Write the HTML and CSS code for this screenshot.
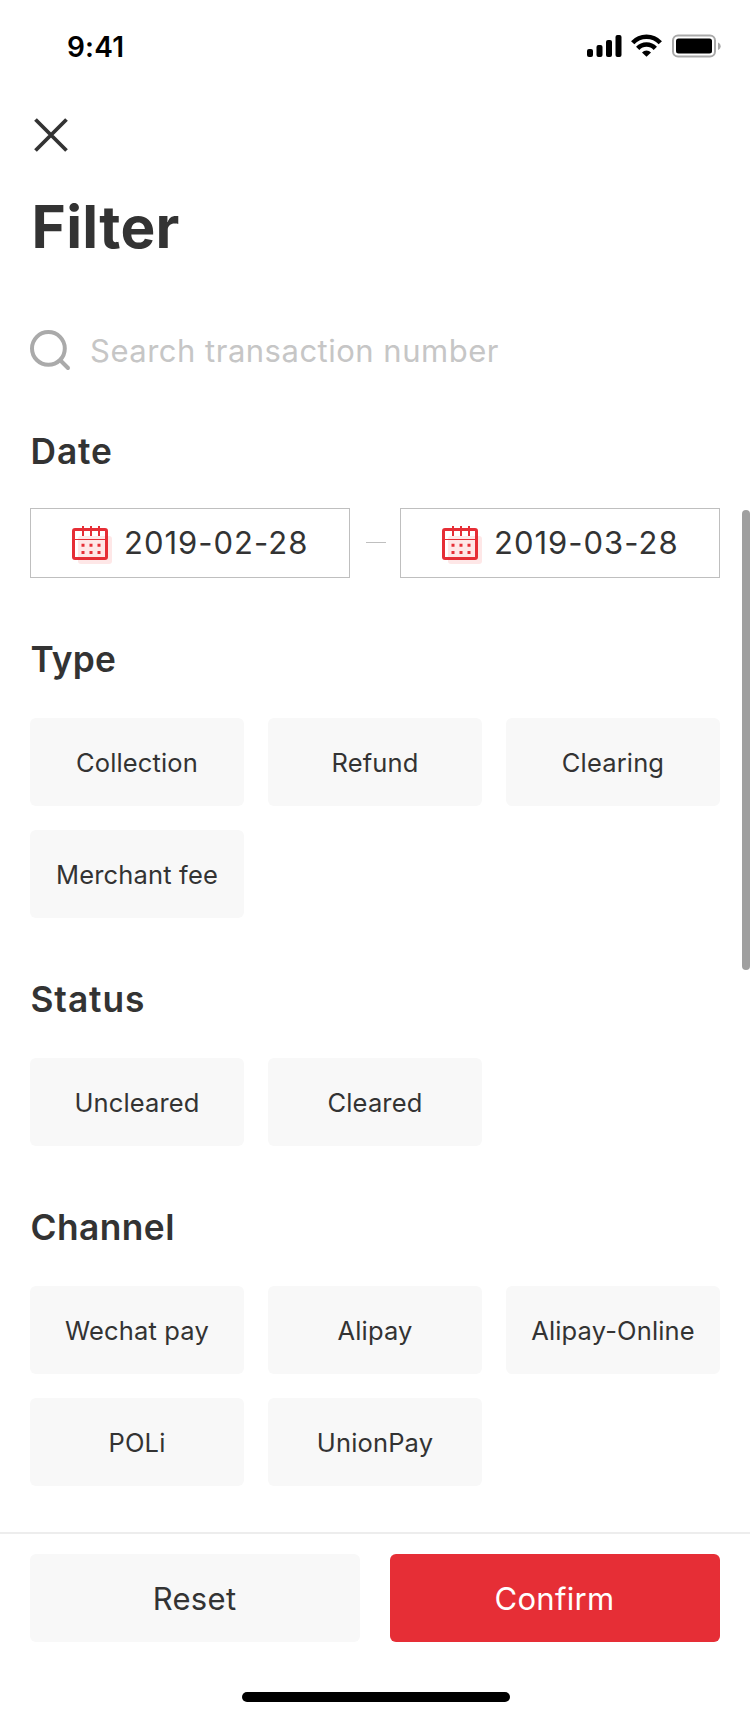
FILE: index.html
```html
<!DOCTYPE html>
<html lang="en">
<head>
<meta charset="utf-8">
<title>Filter</title>
<link rel="stylesheet" href="styles.css">
</head>
<body>
<svg class="defs" width="0" height="0" aria-hidden="true">
  <symbol id="calendar" viewBox="0 0 40 38">
    <rect x="6" y="10" width="34" height="28" rx="3" fill="#fee7e7"/>
    <rect x="1.5" y="3.5" width="33" height="29" rx="1.5" fill="none" stroke="#e62e36" stroke-width="3"/>
    <path d="M3 13.5h30" stroke="#e62e36" stroke-width="1"/>
    <path d="M11 0v10M19 0v10M27 0v10" stroke="#e62e36" stroke-width="2"/>
    <path d="M9.5 19.2h3M17.500 19.200h3M25.500 19.200h3M9.500 26.500h3M17.500 26.500h3M25.500 26.500h3" stroke="#e62e36" stroke-width="3"/>
  </symbol>
</svg>
<div class="screen">
  <header class="status-bar">
    <span class="time">9:41</span>
    <svg class="indicators" width="135" height="24" viewBox="0 0 135 24">
      <rect x="1" y="15" width="6" height="8" rx="2"/>
      <rect x="10.500" y="11" width="6" height="12" rx="2"/>
      <rect x="20" y="6" width="6" height="17" rx="2"/>
      <rect x="29.500" y="1" width="6" height="22" rx="2"/>
      <g fill="none" stroke="#000" stroke-width="4.500">
        <path d="M46.700 8.700a18.800 18.800 0 0 1 27.600 0"/>
        <path d="M51.700 14.400a12 12 0 0 1 17.600 0"/>
      </g>
      <path d="M60.500 22.800l-4.500-4.400a6.500 6.500 0 0 1 9 0z"/>
      <rect x="87" y="1.500" width="42" height="21" rx="5" fill="none" stroke="#a9a9a9" stroke-width="2"/>
      <rect x="90" y="4.500" width="36" height="15" rx="2.500"/>
      <path d="M132 8.500c3.600 1.500 3.600 6 0 7.500z" fill="#a9a9a9"/>
    </svg>
  </header>
  <main class="content">
    <button class="close" aria-label="Close">
      <svg width="34" height="34" viewBox="0 0 34 34"><path d="M1.500 1.500l31 31M32.500 1.500l-31 31" stroke="#333" stroke-width="3.800"/></svg>
    </button>
    <h1 class="title">Filter</h1>
    <div class="search">
      <svg width="42" height="42" viewBox="0 0 42 42" fill="none" stroke="#aaa" stroke-width="4"><circle cx="18.400" cy="18.400" r="16.400"/><path d="M30.500 30.500l7.500 7.500" stroke-linecap="round"/></svg>
      <span class="placeholder">Search transaction number</span>
    </div>
    <section class="group date-group">
      <h2 class="heading date-heading">Date</h2>
      <div class="dates">
        <div class="date"><svg class="cal" width="40" height="38"><use href="#calendar"/></svg><span>2019-02-28</span></div>
        <span class="dash"></span>
        <div class="date"><svg class="cal" width="40" height="38"><use href="#calendar"/></svg><span>2019-03-28</span></div>
      </div>
    </section>
    <section class="group">
      <h2 class="heading type-heading">Type</h2>
      <div class="chips">
        <div class="chip">Collection</div><div class="chip">Refund</div><div class="chip">Clearing</div>
        <div class="chip">Merchant fee</div>
      </div>
    </section>
    <section class="group">
      <h2 class="heading status-heading">Status</h2>
      <div class="chips">
        <div class="chip">Uncleared</div><div class="chip">Cleared</div>
      </div>
    </section>
    <section class="group">
      <h2 class="heading">Channel</h2>
      <div class="chips">
        <div class="chip">Wechat pay</div><div class="chip">Alipay</div><div class="chip">Alipay-Online</div>
        <div class="chip">POLi</div><div class="chip">UnionPay</div>
      </div>
    </section>
  </main>
  <footer class="footer">
    <div class="actions">
      <button class="action reset">Reset</button>
      <button class="action confirm">Confirm</button>
    </div>
    <div class="home-bar"></div>
  </footer>
  <div class="scrollbar"></div>
</div>
</body>
</html>
```

FILE: styles.css
```css
* { box-sizing: border-box; }
body { margin: 0; background: #fff; color: #333; font-family: Inter, "Liberation Sans", sans-serif; }
button { border: 0; padding: 0; background: none; font: inherit; color: inherit; }
.defs { position: absolute; }
.screen { position: relative; width: 750px; height: 1720px; display: flex; flex-direction: column; overflow: hidden; background: #fff; }
.status-bar { flex: none; height: 94px; display: flex; align-items: center; justify-content: space-between; padding: 0 29px 0 67px; color: #000; }
.time { font-size: 28px; font-weight: 600; line-height: 34px; letter-spacing: 0.200px; }
.indicators { display: block; margin-bottom: 2px; }
.content { flex: 1 1 0; min-height: 0; padding: 24px 30px 0; }
.close { display: block; width: 34px; height: 34px; margin-left: 4px; }
.close svg { display: block; }
.title { margin: 39px 0 0 1.500px; font-size: 58.500px; line-height: 72px; font-weight: 700; letter-spacing: 0.300px; }
.search { display: flex; align-items: center; margin-top: 67px; height: 42px; }
.search svg { flex: none; }
.placeholder { margin-left: 18px; font-size: 31px; line-height: 42px; color: #c6c6c6; letter-spacing: 0.500px; white-space: nowrap; }
.group { margin-top: 56px; }
.date-group { margin-top: 55px; }
.heading { margin: 0 0 32px 0.500px; font-size: 35.300px; line-height: 52px; font-weight: 600; letter-spacing: 0.450px; }
.date-heading { margin-bottom: 31px; line-height: 50px; letter-spacing: 0.900px; }
.type-heading { letter-spacing: 0.200px; }
.status-heading { letter-spacing: 0.900px; }
.dates { display: flex; align-items: center; }
.date { width: 320px; height: 70px; border: 1px solid #bfbfbf; display: flex; align-items: center; padding-left: 41px; font-size: 31px; letter-spacing: 1px; white-space: nowrap; }
.date span { padding-bottom: 2px; }
.cal { flex: none; margin: 4px 12px 0 0; }
.dash { width: 20px; height: 1px; margin: 0 14px 1px 16px; background: #bfbfbf; }
.chips { display: grid; grid-template-columns: repeat(3, 214px); gap: 24px; }
.chip { height: 88px; border-radius: 6px; background: #f8f8f8; display: flex; align-items: center; justify-content: center; font-size: 25.500px; letter-spacing: 0.150px; white-space: nowrap; }
.footer { flex: none; height: 188px; border-top: 2px solid #ededed; padding: 20px 30px 0; }
.actions { display: flex; gap: 30px; }
.action { flex: 1; height: 88px; border-radius: 6px; font-size: 31px; letter-spacing: 0.300px; padding-right: 1px; }
.reset { background: #f8f8f8; }
.confirm { background: #e62e36; color: #fff; }
.home-bar { width: 268px; height: 10px; margin: 50px 0 0 212px; border-radius: 5px; background: #000; }
.scrollbar { position: absolute; top: 510px; right: 0; width: 8px; height: 460px; border-radius: 4px; background: #9f9f9f; }
```
